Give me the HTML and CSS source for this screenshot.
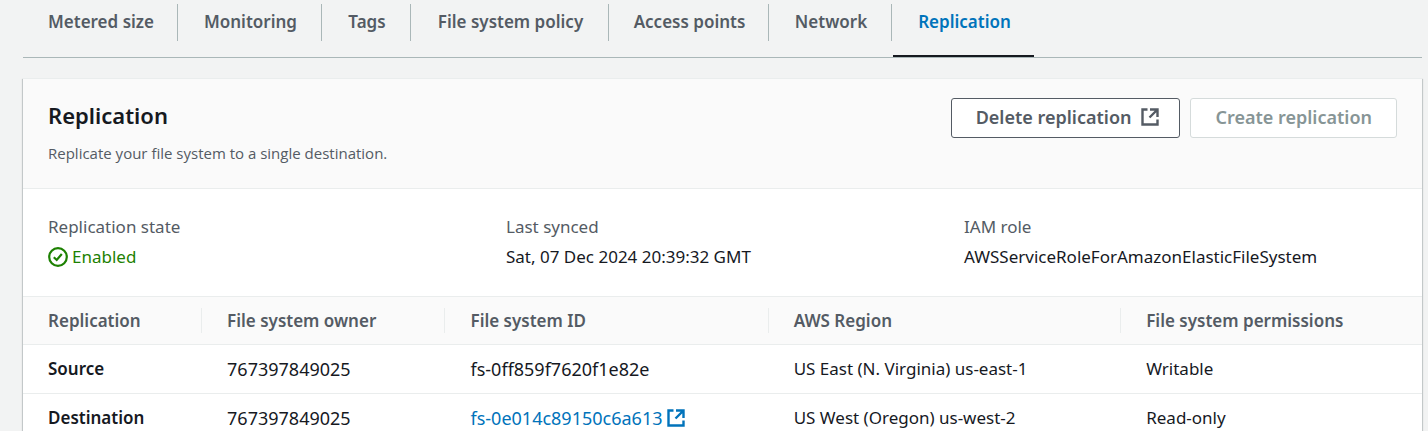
FILE: index.html
```html
<!DOCTYPE html>
<html lang="en">
<head>
<meta charset="utf-8">
<title>Replication</title>
<link rel="stylesheet" href="styles.css">
</head>
<body>
<svg class="sprite" aria-hidden="true">
  <symbol id="external" viewBox="0 0 18 18">
    <path d="M6.5 1.5h-5v15h15v-5M9 1.5h7.5V9M16 2L8.5 9.5" fill="none" stroke="currentColor" stroke-width="2.4"/>
  </symbol>
</svg>
<main class="page">
  <nav class="tabs" role="tablist">
    <button class="tab" role="tab">Metered size</button>
    <button class="tab" role="tab">Monitoring</button>
    <button class="tab" role="tab">Tags</button>
    <button class="tab" role="tab">File system policy</button>
    <button class="tab" role="tab">Access points</button>
    <button class="tab" role="tab">Network</button>
    <button class="tab tab-active" role="tab" aria-selected="true">Replication</button>
  </nav>
  <section class="card">
    <header class="card-header">
      <div class="heading">
        <h2 class="title">Replication</h2>
        <p class="description">Replicate your file system to a single destination.</p>
      </div>
      <div class="actions">
        <button class="button">Delete replication<svg class="icon"><use href="#external"/></svg></button>
        <button class="button" disabled>Create replication</button>
      </div>
    </header>
    <dl class="details">
      <div>
        <dt>Replication state</dt>
        <dd class="status"><svg class="status-icon" viewBox="0 0 20 20"><circle cx="10" cy="10" r="8.8"/><path d="M5.8 10.2l2.9 2.8 5.1-6"/></svg>Enabled</dd>
      </div>
      <div>
        <dt>Last synced</dt>
        <dd>Sat, 07 Dec 2024 20:39:32 GMT</dd>
      </div>
      <div>
        <dt>IAM role</dt>
        <dd>AWSServiceRoleForAmazonElasticFileSystem</dd>
      </div>
    </dl>
    <table class="table">
      <colgroup><col class="col-role"><col class="col-owner"><col class="col-id"><col class="col-region"><col></colgroup>
      <thead>
        <tr>
          <th scope="col"><span>Replication</span></th>
          <th scope="col"><span>File system owner</span></th>
          <th scope="col"><span>File system ID</span></th>
          <th scope="col"><span>AWS Region</span></th>
          <th scope="col"><span>File system permissions</span></th>
        </tr>
      </thead>
      <tbody>
        <tr>
          <th scope="row">Source</th>
          <td class="identifier">767397849025</td>
          <td class="identifier">fs-0ff859f7620f1e82e</td>
          <td>US East (N. Virginia) us-east-1</td>
          <td>Writable</td>
        </tr>
        <tr>
          <th scope="row">Destination</th>
          <td class="identifier">767397849025</td>
          <td class="identifier"><a class="link" href="#">fs-0e014c89150c6a613<svg class="icon"><use href="#external"/></svg></a></td>
          <td>US West (Oregon) us-west-2</td>
          <td>Read-only</td>
        </tr>
      </tbody>
    </table>
  </section>
</main>
</body>
</html>
```
FILE: styles.css
```css
* {
  box-sizing: border-box;
}

body {
  margin: 0;
  background: #f2f3f3;
  color: #16191f;
  font: 17px/28px "Noto Sans", "Open Sans", sans-serif;
}

button {
  font: inherit;
}

.sprite {
  display: none;
}

.page {
  padding: 4px 6px 0 23px;
}

.tabs {
  display: grid;
  grid-template-columns: 155px 144px 89px 198px 160px 123px 142px;
  margin-bottom: 20px;
  border-bottom: 1px solid #aab7b8;
}

.tab {
  height: 37px;
  margin: 0 0 16px;
  padding: 0 0 2px 2px;
  border: 0;
  border-right: 1px solid #aab7b8;
  background: none;
  color: #545b64;
  font-weight: 600;
  white-space: nowrap;
}

.tab-active {
  height: 53px;
  margin: 0 0 0 1px;
  padding-bottom: 16px;
  border-right: 0;
  border-bottom: 2px solid #16191f;
  color: #0073bb;
}

.card {
  border-top: 1px solid #eaeded;
  background: #fff;
  box-shadow: 0 1px 1px rgba(0, 28, 36, 0.3), 1px 1px 1px rgba(0, 28, 36, 0.15), -1px 1px 1px rgba(0, 28, 36, 0.15);
}

.card-header {
  display: flex;
  justify-content: space-between;
  align-items: flex-start;
  padding: 19px 25px 21px;
  border-bottom: 1px solid #eaeded;
  background: #fafafa;
}

.title {
  margin: 0;
  font-size: 22px;
  font-weight: 600;
  line-height: 34px;
}

.description {
  margin: 7px 0 0;
  color: #545b64;
  font-family: "Open Sans", "Noto Sans", sans-serif;
  font-size: 15px;
  line-height: 28px;
}

.actions {
  display: flex;
  gap: 10px;
}

.button {
  display: flex;
  align-items: center;
  gap: 10px;
  height: 40px;
  padding: 0 20px 2px 24px;
  border: 1px solid #545b64;
  border-radius: 3px;
  background: #fff;
  color: #545b64;
  font-size: 18px;
  font-weight: 600;
}

.button:disabled {
  padding-right: 24px;
  border-color: #d5dbdb;
  color: #879596;
}

.icon {
  width: 18px;
  height: 18px;
}

.details {
  display: grid;
  grid-template-columns: repeat(3, 1fr);
  gap: 25px;
  margin: 0;
  padding: 24px 25px;
}

.details dt {
  color: #545b64;
  line-height: 28px;
}

.details dd {
  margin: 0;
  line-height: 31px;
}

.details .status {
  display: flex;
  align-items: center;
  gap: 4px;
  color: #1d8102;
}

.status-icon {
  width: 20px;
  height: 20px;
  fill: none;
  stroke: currentColor;
  stroke-width: 2.2;
}

.table {
  width: 100%;
  border-collapse: collapse;
  table-layout: fixed;
}

.col-role {
  width: 12.8%;
}

.col-owner {
  width: 17.4%;
}

.col-id {
  width: 23.1%;
}

.col-region {
  width: 25.2%;
}

.table tr {
  height: 49px;
}

.table thead tr {
  height: 48px;
}

.table th,
.table td {
  padding: 0 0 0 25px;
  border-bottom: 1px solid #eaeded;
  text-align: left;
  white-space: nowrap;
}

.table th {
  font-weight: 600;
}

.table .identifier {
  font-size: 18px;
}

.table thead th {
  border-top: 1px solid #eaeded;
  background: #fafafa;
  color: #545b64;
}

.table thead span {
  display: block;
  line-height: 25px;
  border-right: 1px solid #eaeded;
}

.table thead th:last-child span {
  border-right: 0;
}

.link {
  display: inline-flex;
  align-items: center;
  gap: 5px;
  color: #0073bb;
  text-decoration: none;
}
```
